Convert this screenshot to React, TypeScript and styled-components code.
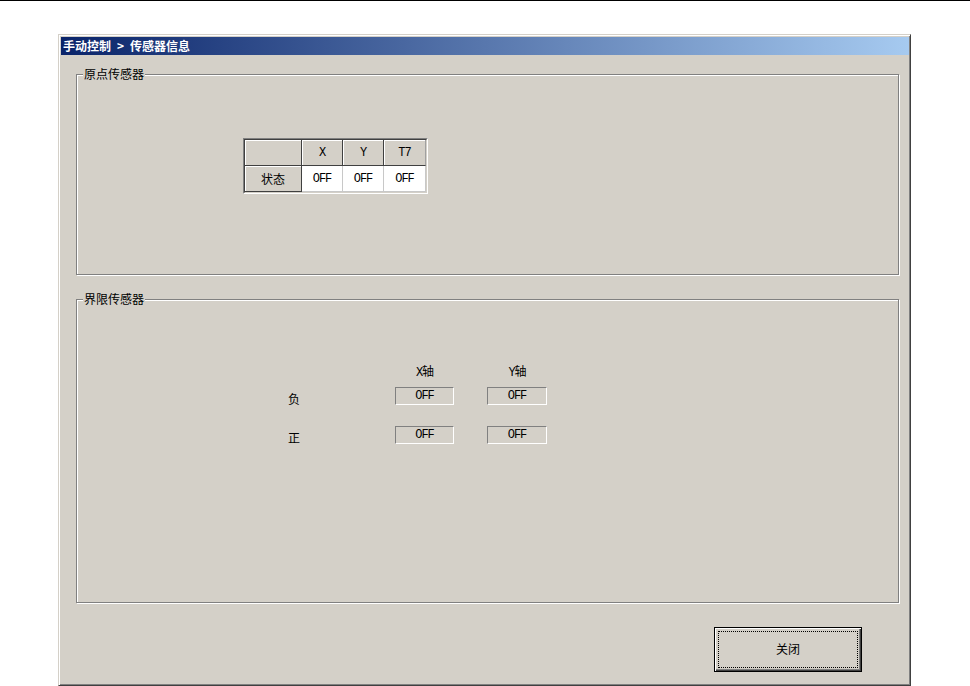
import React from "react";
import styled, { createGlobalStyle } from "styled-components";

const GlobalStyle = createGlobalStyle`
  html, body {
    margin: 0;
    padding: 0;
    background: #fff;
  }
  body {
    font-family: "Noto Sans CJK SC", "Liberation Sans", sans-serif;
    font-size: 12px;
    color: #000;
  }
`;

const mono = `"Liberation Mono", "Noto Sans CJK SC", monospace`;

const TopRule = styled.div`
  height: 1px;
  background: #000;
`;

const Window = styled.div`
  margin: 33px 0 0 58px;
  width: 853px;
  height: 652px;
  box-sizing: border-box;
  border: 1px solid;
  border-color: #d4d0c8 #404040 #404040 #d4d0c8;
  box-shadow: inset 1px 1px 0 #fff, inset -1px -1px 0 #808080;
  padding: 2px 1px 2px 2px;
  background: #d4d0c8;
  display: flex;
  flex-direction: column;
`;

const TitleBar = styled.div`
  height: 18px;
  line-height: 18px;
  padding-left: 2px;
  background: linear-gradient(to right, #0a246a, #a6caf0);
  color: #fff;
  font-weight: bold;
  font-size: 12px;
  white-space: pre;
`;

const Body = styled.div`
  display: flex;
  flex-direction: column;
  gap: 24px;
  padding: 19px 10px 0 15px;
`;

// etched frame with a caption sitting on its top line
const Group = styled.div<{ $height: number; $padTop: number; $padLeft: number }>`
  position: relative;
  box-sizing: border-box;
  height: ${(p) => p.$height}px;
  border: 1px solid #808080;
  box-shadow: 1px 1px 0 #fff, inset 1px 1px 0 #fff;
  padding: ${(p) => p.$padTop}px 0 0 ${(p) => p.$padLeft}px;
`;

const GroupLabel = styled.span`
  position: absolute;
  top: -9px;
  left: 6px;
  padding: 0 1px;
  line-height: 16px;
  background: #d4d0c8;
`;

const TableOuter = styled.div`
  display: inline-block;
  border: 1px solid;
  border-color: #808080 #fff #fff #808080;
`;

const TableGrid = styled.div`
  display: grid;
  grid-template-columns: 57px 41px 41px 42px;
  grid-template-rows: 26px 26px;
  border: 1px solid;
  border-color: #404040 #d4d0c8 #d4d0c8 #404040;
`;

const HeadCell = styled.div<{ $last?: boolean; $cjk?: boolean }>`
  box-sizing: border-box;
  display: flex;
  align-items: center;
  justify-content: center;
  background: #d4d0c8;
  border-right: 1px solid ${(p) => (p.$last ? "#a0a0a0" : "#404040")};
  border-bottom: 1px solid #404040;
  box-shadow: inset 1px 1px 0 #fff;
  font-family: ${(p) => (p.$cjk ? `"Noto Sans CJK SC", sans-serif` : mono)};
  letter-spacing: ${(p) => (p.$cjk ? "0" : "-1px")};
  font-size: 12px;
`;

const DataCell = styled.div`
  box-sizing: border-box;
  display: flex;
  align-items: center;
  justify-content: center;
  background: #fff;
  border-right: 1px solid #c8c8c8;
  border-bottom: 1px solid #c8c8c8;
  font-family: ${mono};
  font-size: 12px;
  letter-spacing: -1px;
`;

const LimitGrid = styled.div`
  display: grid;
  grid-template-columns: 75px 59px 60px;
  grid-template-rows: 22px 39px 18px;
  column-gap: 33px;
  align-items: start;
`;

const AxisHead = styled.div`
  padding-top: 1px;
  line-height: 14px;
  text-align: center;
  font-family: ${mono};
  font-size: 12px;
  letter-spacing: -1px;
`;

const RowLabel = styled.div`
  padding: 3px 0 0 1px;
  line-height: 18px;
`;

const OffBox = styled.div`
  box-sizing: border-box;
  height: 18px;
  display: flex;
  align-items: center;
  justify-content: center;
  border: 1px solid;
  border-color: #808080 #fff #fff #808080;
  font-family: ${mono};
  font-size: 12px;
  letter-spacing: -1px;
`;

const Footer = styled.div`
  display: flex;
  justify-content: flex-end;
  padding-right: 37px;
`;

const CloseButton = styled.button`
  position: relative;
  width: 148px;
  height: 45px;
  box-sizing: border-box;
  padding: 0 0 2px;
  border: 1px solid #000;
  background: #d4d0c8;
  box-shadow: inset 1px 1px 0 #fff, inset -1px -1px 0 #404040, inset -2px -2px 0 #808080;
  font-family: "Noto Sans CJK SC", sans-serif;
  font-size: 12px;
  color: #000;

  &::after {
    content: "";
    position: absolute;
    inset: 3px;
    border: 1px dotted #000;
  }
`;

const axes = ["X", "Y", "T7"];

export default function App() {
  return (
    <>
      <GlobalStyle />
      <TopRule />
      <Window>
        <TitleBar>手动控制{"\u2002>\u2002"}传感器信息</TitleBar>
        <Body>
          <Group $height={201} $padTop={63} $padLeft={166}>
            <GroupLabel>原点传感器</GroupLabel>
            <TableOuter>
              <TableGrid>
                <HeadCell />
                {axes.map((a, i) => (
                  <HeadCell key={a} $last={i === axes.length - 1}>
                    {a}
                  </HeadCell>
                ))}
                <HeadCell $cjk>状态</HeadCell>
                {axes.map((a) => (
                  <DataCell key={a}>OFF</DataCell>
                ))}
              </TableGrid>
            </TableOuter>
          </Group>

          <Group $height={304} $padTop={65} $padLeft={210}>
            <GroupLabel>界限传感器</GroupLabel>
            <LimitGrid>
              <div />
              <AxisHead>X轴</AxisHead>
              <AxisHead>Y轴</AxisHead>
              <RowLabel>负</RowLabel>
              <OffBox>OFF</OffBox>
              <OffBox>OFF</OffBox>
              <RowLabel>正</RowLabel>
              <OffBox>OFF</OffBox>
              <OffBox>OFF</OffBox>
            </LimitGrid>
          </Group>

          <Footer>
            <CloseButton>关闭</CloseButton>
          </Footer>
        </Body>
      </Window>
    </>
  );
}
